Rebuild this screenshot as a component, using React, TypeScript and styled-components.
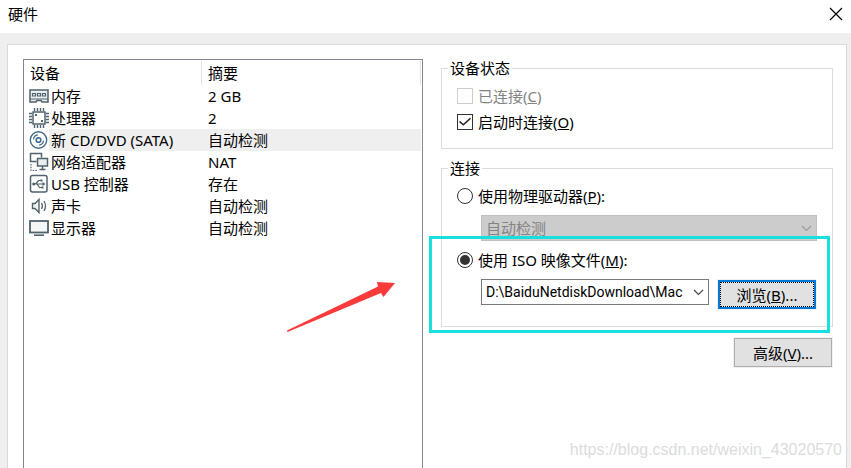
import React, { useState } from "react";
import styled, { createGlobalStyle, css } from "styled-components";

const GlobalStyle = createGlobalStyle`
  *, *::before, *::after { box-sizing: border-box; }
  body {
    margin: 0;
    background: #efefef;
    color: #000;
    font: 15px/22px "Noto Sans", "Noto Sans CJK SC", sans-serif;
  }
  button, select, input { font: inherit; color: inherit; margin: 0; }
`;

const Dialog = styled.div`
  display: flex;
  flex-direction: column;
  min-height: 100vh;
  overflow: hidden;
`;

const TitleBar = styled.header`
  display: flex;
  justify-content: space-between;
  height: 33px;
  padding: 3px 8px 8px;
  background: #fff;
`;

const Title = styled.h1`
  margin: 0;
  font-size: 15px;
  line-height: 22px;
  font-weight: 400;
`;

const CloseButton = styled.button`
  display: flex;
  align-items: center;
  height: 22px;
  padding: 0;
  border: 0;
  background: none;
`;

const Panel = styled.main`
  position: relative;
  flex: 1;
  display: grid;
  grid-template-columns: minmax(0, 1fr) 392px;
  gap: 18px;
  margin: 11px 4px 0 7px;
  padding: 14px 13px 0 15px;
  border: 1px solid #dadada;
  border-bottom: 0;
  background: #fff;
`;

const DeviceList = styled.section`
  position: relative;
  padding: 1px 1px 0 0;
  border: 1px solid #828790;
  border-bottom: 0;
`;

const DeviceTable = styled.table`
  width: 100%;
  table-layout: fixed;
  border-collapse: separate;
  border-spacing: 0;
`;

const IconCol = styled.col`
  width: 25px;
`;

const NameCol = styled.col`
  width: 153px;
`;

const HeadCell = styled.th`
  height: 24px;
  padding: 0 6px;
  border-right: 1px solid #e2e2e2;
  text-align: left;
  font-weight: 400;
`;

const DeviceRow = styled.tr<{ $selected: boolean }>`
  td + td { background: ${(p) => (p.$selected ? "#efefef" : "transparent")}; }
`;

const IconCell = styled.td`
  height: 22px;
  padding: 0 0 0 5px;
  svg { display: block; }
`;

const NameCell = styled.td`
  padding: 0 2px;
  white-space: nowrap;
`;

const SummaryCell = styled.td`
  padding: 0 6px;
`;

const Settings = styled.section`
  display: flex;
  flex-direction: column;
  gap: 10px;
`;

const Group = styled.fieldset`
  position: relative;
  min-width: 0;
  margin: 0;
  padding: 0;
  border: 1px solid #dcdcdc;
`;

const GroupTitle = styled.legend`
  margin-left: 6px;
  padding: 0 2px;
  line-height: 19px;
`;

const GroupBody = styled.div<{ $end: number }>`
  display: flex;
  flex-direction: column;
  padding: 5px 15px ${(p) => p.$end}px;
`;

const Option = styled.label<{ $disabled?: boolean }>`
  display: flex;
  align-items: center;
  gap: 5px;
  height: 26px;
  color: ${(p) => (p.$disabled ? "#838383" : "#000")};
`;

const mark = css`
  appearance: none;
  display: grid;
  place-items: center;
  width: 16px;
  height: 16px;
  border: 1px solid #333;
  background: #fff;
`;

const Check = styled.input`
  ${mark}
  &:disabled { border-color: #ccc; }
  &:checked::after {
    content: "";
    width: 12px;
    height: 10px;
    background: #222;
    clip-path: polygon(0 50%, 9% 40%, 36% 68%, 91% 8%, 100% 18%, 36% 88%);
  }
`;

const Radio = styled.input`
  ${mark}
  border-radius: 50%;
  &:checked::after {
    content: "";
    width: 10px;
    height: 10px;
    border-radius: 50%;
    background: #333;
  }
`;

const Indented = styled.div`
  display: flex;
  align-items: flex-start;
  gap: 8px;
  margin: 6px 0 0 24px;
`;

const SourceRow = styled(Indented)`
  margin-bottom: 6px;
`;

const SelectBox = styled.div`
  position: relative;
  flex: 1;
  min-width: 0;
  svg {
    position: absolute;
    top: 10px;
    right: 5px;
    pointer-events: none;
  }
`;

const Select = styled.select`
  appearance: none;
  display: block;
  width: 100%;
  height: 26px;
  padding: 0 20px 0 4px;
  border: 1px solid #7a7a7a;
  border-radius: 0;
  background: #fff;
  &:disabled {
    border-color: #bfbfbf;
    background: #ccc;
    color: #838383;
    opacity: 1;
  }
`;

const PathSelect = styled(Select)`
  font-family: Roboto, "Noto Sans CJK SC", sans-serif;
  font-size: 14px;
`;

const PushButton = styled.button<{ $focused?: boolean }>`
  width: 100px;
  height: 31px;
  padding: 1px;
  border: 1px solid #f0f0f0;
  background: ${(p) => (p.$focused ? "#0078d7" : "#adadad")};
`;

const ButtonFace = styled.span<{ $focused?: boolean }>`
  display: flex;
  align-items: center;
  justify-content: center;
  height: 100%;
  background: #e1e1e1;
  ${(p) =>
    p.$focused &&
    css`
      margin: 1px;
      height: 25px;
      border: 1px dotted #000;
    `}
`;

const Actions = styled.div`
  display: flex;
  justify-content: flex-end;
`;

const Highlight = styled.div`
  position: absolute;
  top: 58px;
  right: 2px;
  bottom: -7px;
  left: -13px;
  border: 3px solid #19dede;
  pointer-events: none;
`;

const Arrow = styled.svg`
  position: absolute;
  top: 220px;
  right: 26px;
`;

const Watermark = styled.span`
  position: absolute;
  right: 4px;
  bottom: 7px;
  color: #dcdcdc;
  font: 16px/22px "Liberation Sans", sans-serif;
`;

const Chevron = ({ color }: { color: string }) => (
  <svg width="11" height="7" viewBox="0 0 11 7" fill="none" stroke={color} strokeWidth="1.1">
    <path d="M1 1l4.5 4.5L10 1" />
  </svg>
);

const ink = "#50626c";

const MemoryIcon = () => (
  <svg width="20" height="16" viewBox="0 0 20 16" fill="none" stroke={ink}>
    <path d="M1 2h18v12H13l-1-1.500H8L7 14H1z" fill="#e9eef1" strokeWidth="1.500" />
    <path d="M1 11h18" strokeWidth="1" />
    <path d="M3.500 5.500h3v2.500h-3zM8.500 5.500h3v2.500h-3zM13.500 5.500h3v2.500h-3z" strokeWidth="1.200" />
  </svg>
);

const CpuIcon = () => (
  <svg width="20" height="20" viewBox="0 0 20 20" fill="none" stroke={ink}>
    <path
      d="M5.500 0v3M8.500 0v3M11.500 0v3M14.500 0v3M5.500 17v3M8.500 17v3M11.500 17v3M14.500 17v3M0 5.500h3M0 8.500h3M0 11.500h3M0 14.500h3M17 5.500h3M17 8.500h3M17 11.500h3M17 14.500h3"
      strokeWidth="1.400"
    />
    <rect x="4" y="4" width="12" height="12" strokeWidth="1.500" />
    <path d="M6 6h2v2H6zM12 12h2v2h-2z" fill={ink} stroke="none" />
  </svg>
);

const DiscIcon = () => (
  <svg width="20" height="20" viewBox="0 0 20 20" fill="none" stroke="#3f6a8a">
    <circle cx="9.500" cy="10" r="8.200" strokeWidth="1.400" />
    <circle cx="9.500" cy="10" r="2.300" strokeWidth="1.600" />
    <path d="M4.500 9.500a5 5 0 0 1 4.300-4.600M14.500 10.500a5 5 0 0 1-4.300 4.600" strokeWidth="1.200" />
  </svg>
);

const NetworkIcon = () => (
  <svg width="20" height="20" viewBox="0 0 20 20" fill="none" stroke={ink}>
    <path d="M7.500 9.500h-6v-8h11v4" strokeWidth="1.500" />
    <path d="M8.500 6.500h10v7.500h-10z" fill="#e9eef1" strokeWidth="1.500" />
    <path d="M13.500 14v3M10.500 17.500h6" strokeWidth="1.500" />
    <path d="M2 12v6.500h7" strokeWidth="1.200" strokeDasharray="1.500 1.200" />
  </svg>
);

const UsbIcon = () => (
  <svg width="20" height="20" viewBox="0 0 20 20" fill="none" stroke={ink}>
    <rect x="1.500" y="1.500" width="16.500" height="16.500" rx="2" strokeWidth="1.500" />
    <path d="M4 10h11M6.500 10l3-3.500H12M8 10l2.500 3.500H13" strokeWidth="1.200" />
    <circle cx="4.700" cy="10" r="1.500" fill={ink} stroke="none" />
    <path d="M13.500 8l3 2-3 2zM11.500 5.500h2v2h-2zM12.500 12.500h2v2h-2z" fill={ink} stroke="none" />
  </svg>
);

const SoundIcon = () => (
  <svg width="20" height="18" viewBox="0 0 20 18" fill="none" stroke={ink}>
    <path d="M3.500 6.500H6l4-4v13l-4-4H3.500z" fill="#f4f6f7" strokeWidth="1.400" />
    <path d="M12.500 6q1.800 3 0 6M15 4q3 5 0 10" strokeWidth="1.300" />
  </svg>
);

const DisplayIcon = () => (
  <svg width="20" height="18" viewBox="0 0 20 18" fill="none" stroke={ink}>
    <rect x="1" y="2" width="18" height="11.500" fill="#f4f6f7" strokeWidth="1.800" />
    <path d="M5 16.200h10" strokeWidth="1.600" />
  </svg>
);

const devices = [
  { name: "内存", summary: "2 GB", Icon: MemoryIcon },
  { name: "处理器", summary: "2", Icon: CpuIcon },
  { name: "新 CD/DVD (SATA)", summary: "自动检测", Icon: DiscIcon },
  { name: "网络适配器", summary: "NAT", Icon: NetworkIcon },
  { name: "USB 控制器", summary: "存在", Icon: UsbIcon },
  { name: "声卡", summary: "自动检测", Icon: SoundIcon },
  { name: "显示器", summary: "自动检测", Icon: DisplayIcon },
];

export default function App() {
  const [selected, setSelected] = useState(2);
  const [connectOnStart, setConnectOnStart] = useState(true);
  const [source, setSource] = useState("iso");

  return (
    <>
      <GlobalStyle />
      <Dialog>
        <TitleBar>
          <Title>硬件</Title>
          <CloseButton aria-label="关闭">
            <svg width="14" height="14" viewBox="0 0 14 14" stroke="#000" strokeWidth="1.200">
              <path d="M1 1l12 12M13 1L1 13" />
            </svg>
          </CloseButton>
        </TitleBar>
        <Panel>
          <DeviceList>
            <DeviceTable>
              <colgroup>
                <IconCol />
                <NameCol />
                <col />
              </colgroup>
              <thead>
                <tr>
                  <HeadCell colSpan={2}>设备</HeadCell>
                  <HeadCell>摘要</HeadCell>
                </tr>
              </thead>
              <tbody>
                {devices.map(({ name, summary, Icon }, i) => (
                  <DeviceRow key={name} $selected={i === selected} onClick={() => setSelected(i)}>
                    <IconCell><Icon /></IconCell>
                    <NameCell>{name}</NameCell>
                    <SummaryCell>{summary}</SummaryCell>
                  </DeviceRow>
                ))}
              </tbody>
            </DeviceTable>
            <Arrow width="112" height="54" viewBox="0 0 112 54" fill="#fb3b3b">
              <path d="M3 50.500L94 6.500L93 2L111 3L99.500 17L97 13L3.500 52Z" />
            </Arrow>
          </DeviceList>
          <Settings>
            <Group>
              <GroupTitle>设备状态</GroupTitle>
              <GroupBody $end={13}>
                <Option $disabled>
                  <Check type="checkbox" disabled />
                  <span>已连接(<u>C</u>)</span>
                </Option>
                <Option>
                  <Check
                    type="checkbox"
                    checked={connectOnStart}
                    onChange={(e) => setConnectOnStart(e.target.checked)}
                  />
                  <span>启动时连接(<u>O</u>)</span>
                </Option>
              </GroupBody>
            </Group>
            <Group>
              <GroupTitle>连接</GroupTitle>
              <GroupBody $end={16}>
                <Option>
                  <Radio
                    type="radio"
                    name="source"
                    checked={source === "drive"}
                    onChange={() => setSource("drive")}
                  />
                  <span>使用物理驱动器(<u>P</u>):</span>
                </Option>
                <SourceRow>
                  <SelectBox>
                    <Select disabled aria-label="物理驱动器">
                      <option>自动检测</option>
                    </Select>
                    <Chevron color="#9a9a9a" />
                  </SelectBox>
                </SourceRow>
                <Option>
                  <Radio
                    type="radio"
                    name="source"
                    checked={source === "iso"}
                    onChange={() => setSource("iso")}
                  />
                  <span>使用 ISO 映像文件(<u>M</u>):</span>
                </Option>
                <Indented>
                  <SelectBox>
                    <PathSelect aria-label="ISO 映像文件">
                      <option>D:\BaiduNetdiskDownload\Mac</option>
                    </PathSelect>
                    <Chevron color="#444" />
                  </SelectBox>
                  <PushButton $focused>
                    <ButtonFace $focused>
                      <span>浏览(<u>B</u>)...</span>
                    </ButtonFace>
                  </PushButton>
                </Indented>
              </GroupBody>
              <Highlight />
            </Group>
            <Actions>
              <PushButton>
                <ButtonFace>
                  <span>高级(<u>V</u>)...</span>
                </ButtonFace>
              </PushButton>
            </Actions>
          </Settings>
          <Watermark>https://blog.csdn.net/weixin_43020570</Watermark>
        </Panel>
      </Dialog>
    </>
  );
}
